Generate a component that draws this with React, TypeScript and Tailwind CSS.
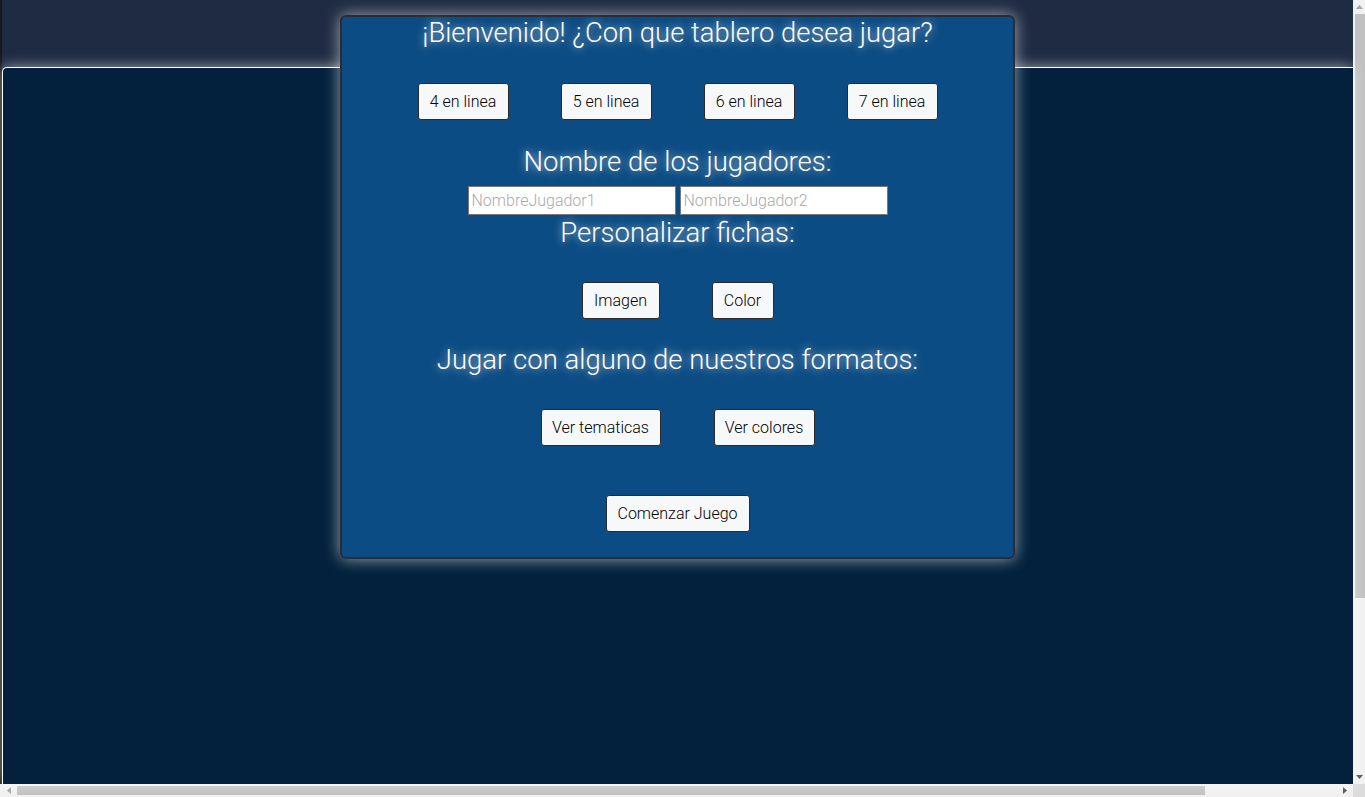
import React from "react";

const Btn = ({ children, w }: { children: React.ReactNode; w: string }) => (
  <button
    className={`h-[37px] ${w} rounded-[3px] border border-[#2b2b2b] bg-[#f7f8fa] text-[16px] font-light text-black`}
  >
    {children}
  </button>
);

const heading =
  "font-light leading-[33px] text-white [text-shadow:0_0_8px_rgba(255,255,255,0.75)]";

const Tri = ({ dir, color }: { dir: "up" | "down" | "left" | "right"; color: string }) => {
  const pts: Record<string, string> = {
    up: "0,4 3.5,0 7,4",
    down: "0,0 7,0 3.5,4",
    left: "4,0 4,7 0,3.5",
    right: "0,0 0,7 4,3.5",
  };
  const vertical = dir === "up" || dir === "down";
  return (
    <svg width={vertical ? 7 : 4} height={vertical ? 4 : 7} viewBox={vertical ? "0 0 7 4" : "0 0 4 7"}>
      <polygon points={pts[dir]} fill={color} />
    </svg>
  );
};

export default function App() {
  return (
    <div
      className="flex h-screen w-screen flex-col overflow-hidden bg-[#f1f1f1]"
      style={{ fontFamily: "Roboto, 'Noto Sans', sans-serif" }}
    >
      <div className="flex min-h-0 flex-1">
        <div className="relative flex min-w-0 flex-1 bg-[#1f2b43]">
          <div className="w-[2px] shrink-0 bg-[#16181c]" />
          <div className="flex flex-1 flex-col">
            <header className="h-[67px] shrink-0" />
            <main className="flex-1 rounded-tl-[5px] border-l border-t border-white bg-[#03213c] shadow-[0_0_14px_rgba(255,255,255,0.55)]" />
          </div>

          <div className="absolute left-[340px] top-[15px] flex w-[675px] flex-col items-center rounded-[6px] border-2 border-[#2a2d33] bg-[#0c4c84] pb-[25px] shadow-[0_0_16px_rgba(255,255,255,0.6)]">
            <h1 className={`${heading} text-[27.4px]`}>¡Bienvenido! ¿Con que tablero desea jugar?</h1>
            <div className="mt-[33px] flex gap-[52px]">
              <Btn w="w-[91px]">4 en linea</Btn>
              <Btn w="w-[91px]">5 en linea</Btn>
              <Btn w="w-[91px]">6 en linea</Btn>
              <Btn w="w-[91px]">7 en linea</Btn>
            </div>
            <h2 className={`${heading} mt-[25px] text-[27.5px]`}>Nombre de los jugadores:</h2>
            <div className="mt-[8px] flex gap-[4px]">
              <input
                placeholder="NombreJugador1"
                className="h-[29px] w-[208px] border border-[#777] bg-white px-[3px] text-[16px] font-light text-black placeholder:text-[#aaa]"
              />
              <input
                placeholder="NombreJugador2"
                className="h-[29px] w-[208px] border border-[#777] bg-white px-[3px] text-[16px] font-light text-black placeholder:text-[#aaa]"
              />
            </div>
            <h2 className={`${heading} mt-[1px] text-[27.5px]`}>Personalizar fichas:</h2>
            <div className="mt-[33px] flex gap-[52px]">
              <Btn w="w-[78px]">Imagen</Btn>
              <Btn w="w-[62px]">Color</Btn>
            </div>
            <h2 className={`${heading} mt-[24px] text-[27.5px]`}>Jugar con alguno de nuestros formatos:</h2>
            <div className="mt-[33px] flex gap-[53px]">
              <Btn w="w-[120px]">Ver tematicas</Btn>
              <Btn w="w-[101px]">Ver colores</Btn>
            </div>
            <div className="mt-[49px]">
              <Btn w="w-[144px]">Comenzar Juego</Btn>
            </div>
          </div>
        </div>

        {/* vertical scrollbar */}
        <div className="flex w-[12px] shrink-0 flex-col bg-[#f1f1f1]">
          <div className="flex h-[14px] shrink-0 items-center justify-center pl-[1px]">
            <Tri dir="up" color="#a3a3a3" />
          </div>
          <div className="ml-[2px] h-[584px] shrink-0 bg-[#c1c1c1]" />
          <div className="flex-1" />
          <div className="flex h-[14px] shrink-0 items-center justify-center pl-[1px]">
            <Tri dir="down" color="#505050" />
          </div>
        </div>
      </div>

      {/* horizontal scrollbar */}
      <div className="flex h-[13px] shrink-0">
        <div className="flex flex-1 items-center bg-[#f1f1f1]">
          <div className="flex w-[17px] shrink-0 items-center justify-center">
            <Tri dir="left" color="#a3a3a3" />
          </div>
          <div className="h-[9px] w-[1188px] shrink-0 bg-[#c1c1c1]" />
          <div className="flex-1" />
          <div className="flex w-[16px] shrink-0 items-center justify-center">
            <Tri dir="right" color="#505050" />
          </div>
        </div>
        <div className="w-[12px] shrink-0 bg-[#dcdcdc]" />
      </div>
    </div>
  );
}
